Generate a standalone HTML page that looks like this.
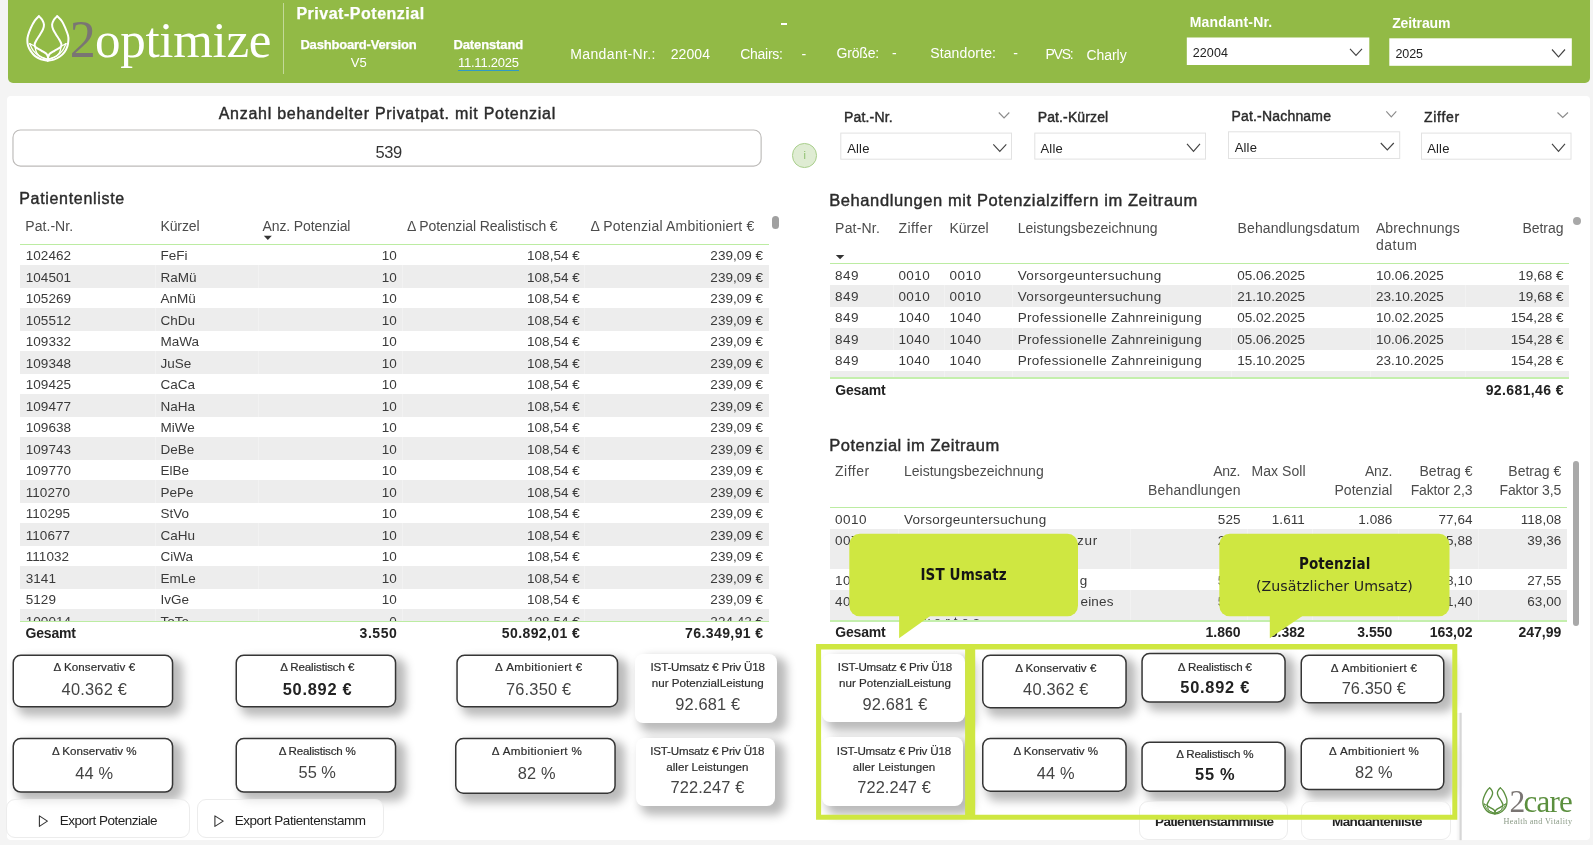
<!DOCTYPE html>
<html lang="de"><head><meta charset="utf-8"><title>Privat-Potenzial</title>
<style>
html,body{margin:0;padding:0}
body{width:1593px;height:845px;overflow:hidden;background:#f4f4f4;position:relative;font-family:"Liberation Sans",sans-serif;color:#333}
#root{position:absolute;left:0;top:0;width:1593px;height:845px;will-change:transform}
.b{position:absolute;display:block}
.t{position:absolute;white-space:pre;font-family:"Liberation Sans",sans-serif;color:#333}
.f{font-family:"Liberation Serif",serif}
.d{font-family:"DejaVu Sans","Liberation Sans",sans-serif}
.dc{font-family:"DejaVu Sans Condensed","DejaVu Sans","Liberation Sans",sans-serif}
</style></head>
<body>
<div id="root">
<div class="b" style="left:8.00px;top:0.00px;width:1582.00px;height:82.60px;background:#92ba46;border-radius:0 0 5px 5px;"></div>
<svg class="b" style="left:23px;top:11px" width="50" height="54"><g transform="translate(3.00,3.40)"><g transform="translate(21.7,23.9) scale(.955) translate(-21.7,-23.5)"><g fill="none" stroke="#fff" stroke-linecap="round" stroke-linejoin="round"><g stroke-width="2.1"><path d="M12.47,0.35 C11.76,1.12 9.62,2.89 8.20,4.96 C6.78,7.04 5.13,10.17 3.94,12.78 C2.76,15.38 1.69,18.46 1.10,20.59 C0.51,22.72 0.39,23.78 0.39,25.56 C0.39,27.34 0.51,29.35 1.10,31.24 C1.69,33.14 2.76,35.15 3.94,36.92 C5.13,38.70 6.43,40.48 8.20,41.90 C9.98,43.32 12.35,44.62 14.60,45.45 C16.85,46.28 20.52,46.63 21.70,46.87"/> <path d="M31.64,0.35 C32.47,1.23 35.19,3.60 36.61,5.67 C38.03,7.75 39.10,10.29 40.16,12.78 C41.23,15.26 42.47,18.46 43.01,20.59 C43.54,22.72 43.48,23.67 43.36,25.56 C43.24,27.45 42.95,29.94 42.30,31.95 C41.64,33.96 40.76,35.86 39.45,37.63 C38.15,39.41 36.38,41.24 34.48,42.61 C32.59,43.97 30.22,45.09 28.09,45.80 C25.96,46.51 22.76,46.69 21.70,46.87"/> <path d="M12.47,0.35 C13.06,1.00 15.13,2.77 16.02,4.25 C16.90,5.73 17.67,7.57 17.79,9.22 C17.91,10.88 17.38,12.54 16.73,14.20 C16.08,15.85 14.95,17.39 13.89,19.17 C12.82,20.94 11.28,23.19 10.34,24.85 C9.39,26.51 8.56,28.05 8.20,29.11 C7.85,30.18 8.03,30.59 8.20,31.24 C8.38,31.89 8.09,32.13 9.27,33.02 C10.45,33.91 13.47,35.44 15.31,36.57 C17.14,37.69 19.15,38.64 20.28,39.76 C21.40,40.89 21.79,42.13 22.05,43.32 C22.31,44.50 21.88,46.28 21.84,46.87"/> <path d="M31.64,0.35 C31.05,1.00 28.98,2.77 28.09,4.25 C27.20,5.73 26.43,7.57 26.32,9.22 C26.20,10.88 26.73,12.54 27.38,14.20 C28.03,15.85 29.16,17.39 30.22,19.17 C31.29,20.94 32.83,23.19 33.77,24.85 C34.72,26.51 35.55,28.05 35.90,29.11 C36.26,30.18 36.08,30.59 35.90,31.24 C35.73,31.89 36.02,32.13 34.84,33.02 C33.65,33.91 30.64,35.44 28.80,36.57 C26.97,37.69 24.95,38.64 23.83,39.76 C22.71,40.89 22.35,42.72 22.05,43.32"/></g><g stroke-width="1.35"><path d="M2.88,29.11 C3.47,30.30 4.83,34.08 6.43,36.21 C8.03,38.34 9.98,40.38 12.47,41.90 C14.95,43.41 19.86,44.74 21.34,45.30"/> <path d="M2.88,29.11 C3.82,29.58 7.61,31.48 8.56,31.95"/> <path d="M8.56,33.37 C8.86,34.32 9.21,37.40 10.34,39.05 C11.46,40.71 13.47,42.19 15.31,43.32 C17.14,44.44 20.34,45.39 21.34,45.80"/> <path d="M40.88,29.11 C40.28,30.30 38.92,34.08 37.32,36.21 C35.73,38.34 33.77,40.38 31.29,41.90 C28.80,43.41 23.89,44.74 22.41,45.30"/> <path d="M40.88,29.11 C39.99,29.58 36.44,31.48 35.55,31.95"/> <path d="M35.55,33.37 C35.25,34.32 34.90,37.40 33.77,39.05 C32.65,40.71 30.70,42.19 28.80,43.32 C26.91,44.44 23.47,45.39 22.41,45.80"/></g></g></g></g></svg>
<span class="t f" style="left:69.70px;top:14.25px;font-size:52px;line-height:52px;color:#7a7573;">2</span>
<span class="t f" style="left:95.10px;top:14.69px;font-size:51px;line-height:51px;color:#fff;letter-spacing:-0.307px;">optimize</span>
<div class="b" style="left:283.00px;top:2.50px;width:1.20px;height:71.50px;background:rgba(255,255,255,.45);"></div>
<span class="t" style="left:296.40px;top:6.16px;font-size:16px;line-height:16px;font-weight:700;color:#fff;letter-spacing:0.518px;-webkit-text-stroke:0.25px currentColor;">Privat-Potenzial</span>
<span class="t" style="left:300.40px;top:38.00px;font-size:13px;line-height:13px;font-weight:700;color:#fff;letter-spacing:-0.187px;-webkit-text-stroke:0.25px currentColor;">Dashboard-Version</span>
<span class="t" style="left:350.75px;top:56.00px;font-size:13px;line-height:13px;color:#fff;">V5</span>
<span class="t" style="left:453.40px;top:38.00px;font-size:13px;line-height:13px;font-weight:700;color:#fff;letter-spacing:-0.110px;-webkit-text-stroke:0.25px currentColor;">Datenstand</span>
<span class="t" style="left:457.90px;top:56.00px;font-size:13px;line-height:13px;color:#fff;letter-spacing:-0.215px;">11.11.2025</span>
<div class="b" style="left:458.20px;top:70.20px;width:60.40px;height:1.30px;background:#2f9bc6;"></div>
<span class="t" style="left:570.20px;top:46.95px;font-size:14px;line-height:14px;color:#fff;letter-spacing:0.398px;">Mandant-Nr.:</span>
<span class="t" style="left:670.70px;top:46.95px;font-size:14px;line-height:14px;color:#fff;letter-spacing:0.092px;">22004</span>
<span class="t" style="left:740.20px;top:46.95px;font-size:14px;line-height:14px;color:#fff;letter-spacing:-0.257px;">Chairs:</span>
<span class="t" style="left:801.50px;top:46.95px;font-size:14px;line-height:14px;color:#fff;">-</span>
<span class="t" style="left:836.40px;top:46.15px;font-size:14px;line-height:14px;color:#fff;letter-spacing:-0.153px;">Größe:</span>
<span class="t" style="left:892.00px;top:46.15px;font-size:14px;line-height:14px;color:#fff;">-</span>
<span class="t" style="left:930.20px;top:46.15px;font-size:14px;line-height:14px;color:#fff;letter-spacing:0.133px;">Standorte:</span>
<span class="t" style="left:1013.30px;top:46.15px;font-size:14px;line-height:14px;color:#fff;">-</span>
<span class="t" style="left:1045.40px;top:47.45px;font-size:14px;line-height:14px;color:#fff;letter-spacing:-1.201px;">PVS:</span>
<span class="t" style="left:1086.40px;top:48.15px;font-size:14px;line-height:14px;color:#fff;letter-spacing:-0.031px;">Charly</span>
<div class="b" style="left:780.60px;top:23.00px;width:6.90px;height:2.20px;background:#fff;"></div>
<span class="t" style="left:1189.70px;top:14.95px;font-size:14px;line-height:14px;font-weight:700;color:#fff;letter-spacing:0.161px;">Mandant-Nr.</span>
<span class="t" style="left:1392.20px;top:15.65px;font-size:14px;line-height:14px;font-weight:700;color:#fff;letter-spacing:-0.118px;">Zeitraum</span>
<svg class="b" style="left:1185px;top:36px" width="186" height="30"><rect x="1.80" y="1.50" width="182.50" height="27.50" fill="#fff"/></svg>
<span class="t" style="left:1192.70px;top:46.92px;font-size:12.5px;line-height:12.5px;color:#222;letter-spacing:0.135px;">22004</span>
<svg class="b" style="left:1348px;top:46px" width="16" height="12"><g transform="translate(2.00,2.80)"><polyline points="0,0 6.00,6.70 12.00,0" fill="none" stroke="#444" stroke-width="1.15"/></g></svg>
<svg class="b" style="left:1388px;top:37px" width="185" height="30"><rect x="1.30" y="1.30" width="182.50" height="27.50" fill="#fff"/></svg>
<span class="t" style="left:1395.50px;top:48.22px;font-size:12.5px;line-height:12.5px;color:#222;letter-spacing:-0.103px;">2025</span>
<svg class="b" style="left:1550px;top:47px" width="17" height="12"><g transform="translate(2.00,2.50)"><polyline points="0,0 6.50,7.30 13.00,0" fill="none" stroke="#444" stroke-width="1.15"/></g></svg>
<div class="b" style="left:7.00px;top:96.00px;width:1583.00px;height:744.20px;background:#fff;border-radius:4px;"></div>
<span class="t" style="left:218.70px;top:105.96px;font-size:16px;line-height:16px;color:#2b2b2b;letter-spacing:0.730px;-webkit-text-stroke:0.42px currentColor;">Anzahl behandelter Privatpat. mit Potenzial</span>
<svg class="b" style="left:11px;top:128px" width="752" height="40"><rect x="1.98" y="1.98" width="748.15" height="36.15" fill="#fff" stroke="#bdbbb9" stroke-width="1.15" rx="7.5"/></svg>
<span class="t" style="left:375.40px;top:144.03px;font-size:16.5px;line-height:16.5px;letter-spacing:-0.365px;">539</span>
<span class="t" style="left:19.20px;top:191.46px;font-size:16px;line-height:16px;color:#2b2b2b;letter-spacing:0.688px;-webkit-text-stroke:0.42px currentColor;">Patientenliste</span>
<span class="t" style="left:25.30px;top:219.15px;font-size:14px;line-height:14px;color:#4c4c4c;letter-spacing:0.049px;">Pat.-Nr.</span>
<span class="t" style="left:160.40px;top:219.15px;font-size:14px;line-height:14px;color:#4c4c4c;letter-spacing:-0.077px;">Kürzel</span>
<span class="t" style="left:262.60px;top:219.15px;font-size:14px;line-height:14px;color:#4c4c4c;letter-spacing:-0.130px;">Anz. Potenzial</span>
<span class="t" style="left:407.10px;top:219.15px;font-size:14px;line-height:14px;color:#4c4c4c;letter-spacing:-0.116px;">Δ Potenzial Realistisch €</span>
<span class="t" style="left:590.40px;top:219.15px;font-size:14px;line-height:14px;color:#4c4c4c;letter-spacing:0.207px;">Δ Potenzial Ambitioniert €</span>
<svg class="b" style="left:261px;top:233px" width="13" height="9"><g transform="translate(2.80,2.80)"><polygon points="0,0 8.00,0 4.00,4.20" fill="#333"/></g></svg>
<div class="b" style="left:771.80px;top:215.50px;width:7.50px;height:13.30px;background:#a0a0a0;border-radius:4px;"></div>
<div class="b" style="left:20px;top:245px;width:748.8px;height:376px;overflow:hidden">
<span class="t" style="left:5.70px;top:4.37px;font-size:13.5px;line-height:13.5px;color:#3a3a3a;letter-spacing:0.070px;">102462</span>
<span class="t" style="left:140.40px;top:4.37px;font-size:13.5px;line-height:13.5px;color:#3a3a3a;">FeFi</span>
<span class="t" style="left:361.71px;top:4.37px;font-size:13.5px;line-height:13.5px;color:#3a3a3a;letter-spacing:0.070px;">10</span>
<span class="t" style="left:507.05px;top:4.37px;font-size:13.5px;line-height:13.5px;color:#3a3a3a;letter-spacing:0.029px;">108,54 €</span>
<span class="t" style="left:690.35px;top:4.37px;font-size:13.5px;line-height:13.5px;color:#3a3a3a;letter-spacing:0.029px;">239,09 €</span>
<div class="b" style="left:0;top:20.10px;width:748.8px;height:22.5px;background:#ededed"></div>
<span class="t" style="left:5.70px;top:25.87px;font-size:13.5px;line-height:13.5px;color:#3a3a3a;letter-spacing:0.070px;">104501</span>
<span class="t" style="left:140.40px;top:25.87px;font-size:13.5px;line-height:13.5px;color:#3a3a3a;">RaMü</span>
<span class="t" style="left:361.71px;top:25.87px;font-size:13.5px;line-height:13.5px;color:#3a3a3a;letter-spacing:0.070px;">10</span>
<span class="t" style="left:507.05px;top:25.87px;font-size:13.5px;line-height:13.5px;color:#3a3a3a;letter-spacing:0.029px;">108,54 €</span>
<span class="t" style="left:690.35px;top:25.87px;font-size:13.5px;line-height:13.5px;color:#3a3a3a;letter-spacing:0.029px;">239,09 €</span>
<span class="t" style="left:5.70px;top:47.37px;font-size:13.5px;line-height:13.5px;color:#3a3a3a;letter-spacing:0.070px;">105269</span>
<span class="t" style="left:140.40px;top:47.37px;font-size:13.5px;line-height:13.5px;color:#3a3a3a;">AnMü</span>
<span class="t" style="left:361.71px;top:47.37px;font-size:13.5px;line-height:13.5px;color:#3a3a3a;letter-spacing:0.070px;">10</span>
<span class="t" style="left:507.05px;top:47.37px;font-size:13.5px;line-height:13.5px;color:#3a3a3a;letter-spacing:0.029px;">108,54 €</span>
<span class="t" style="left:690.35px;top:47.37px;font-size:13.5px;line-height:13.5px;color:#3a3a3a;letter-spacing:0.029px;">239,09 €</span>
<div class="b" style="left:0;top:63.10px;width:748.8px;height:22.5px;background:#ededed"></div>
<span class="t" style="left:5.70px;top:68.87px;font-size:13.5px;line-height:13.5px;color:#3a3a3a;letter-spacing:0.070px;">105512</span>
<span class="t" style="left:140.40px;top:68.87px;font-size:13.5px;line-height:13.5px;color:#3a3a3a;">ChDu</span>
<span class="t" style="left:361.71px;top:68.87px;font-size:13.5px;line-height:13.5px;color:#3a3a3a;letter-spacing:0.070px;">10</span>
<span class="t" style="left:507.05px;top:68.87px;font-size:13.5px;line-height:13.5px;color:#3a3a3a;letter-spacing:0.029px;">108,54 €</span>
<span class="t" style="left:690.35px;top:68.87px;font-size:13.5px;line-height:13.5px;color:#3a3a3a;letter-spacing:0.029px;">239,09 €</span>
<span class="t" style="left:5.70px;top:90.37px;font-size:13.5px;line-height:13.5px;color:#3a3a3a;letter-spacing:0.070px;">109332</span>
<span class="t" style="left:140.40px;top:90.37px;font-size:13.5px;line-height:13.5px;color:#3a3a3a;">MaWa</span>
<span class="t" style="left:361.71px;top:90.37px;font-size:13.5px;line-height:13.5px;color:#3a3a3a;letter-spacing:0.070px;">10</span>
<span class="t" style="left:507.05px;top:90.37px;font-size:13.5px;line-height:13.5px;color:#3a3a3a;letter-spacing:0.029px;">108,54 €</span>
<span class="t" style="left:690.35px;top:90.37px;font-size:13.5px;line-height:13.5px;color:#3a3a3a;letter-spacing:0.029px;">239,09 €</span>
<div class="b" style="left:0;top:106.10px;width:748.8px;height:22.5px;background:#ededed"></div>
<span class="t" style="left:5.70px;top:111.87px;font-size:13.5px;line-height:13.5px;color:#3a3a3a;letter-spacing:0.070px;">109348</span>
<span class="t" style="left:140.40px;top:111.87px;font-size:13.5px;line-height:13.5px;color:#3a3a3a;">JuSe</span>
<span class="t" style="left:361.71px;top:111.87px;font-size:13.5px;line-height:13.5px;color:#3a3a3a;letter-spacing:0.070px;">10</span>
<span class="t" style="left:507.05px;top:111.87px;font-size:13.5px;line-height:13.5px;color:#3a3a3a;letter-spacing:0.029px;">108,54 €</span>
<span class="t" style="left:690.35px;top:111.87px;font-size:13.5px;line-height:13.5px;color:#3a3a3a;letter-spacing:0.029px;">239,09 €</span>
<span class="t" style="left:5.70px;top:133.37px;font-size:13.5px;line-height:13.5px;color:#3a3a3a;letter-spacing:0.070px;">109425</span>
<span class="t" style="left:140.40px;top:133.37px;font-size:13.5px;line-height:13.5px;color:#3a3a3a;">CaCa</span>
<span class="t" style="left:361.71px;top:133.37px;font-size:13.5px;line-height:13.5px;color:#3a3a3a;letter-spacing:0.070px;">10</span>
<span class="t" style="left:507.05px;top:133.37px;font-size:13.5px;line-height:13.5px;color:#3a3a3a;letter-spacing:0.029px;">108,54 €</span>
<span class="t" style="left:690.35px;top:133.37px;font-size:13.5px;line-height:13.5px;color:#3a3a3a;letter-spacing:0.029px;">239,09 €</span>
<div class="b" style="left:0;top:149.10px;width:748.8px;height:22.5px;background:#ededed"></div>
<span class="t" style="left:5.70px;top:154.87px;font-size:13.5px;line-height:13.5px;color:#3a3a3a;letter-spacing:0.070px;">109477</span>
<span class="t" style="left:140.40px;top:154.87px;font-size:13.5px;line-height:13.5px;color:#3a3a3a;">NaHa</span>
<span class="t" style="left:361.71px;top:154.87px;font-size:13.5px;line-height:13.5px;color:#3a3a3a;letter-spacing:0.070px;">10</span>
<span class="t" style="left:507.05px;top:154.87px;font-size:13.5px;line-height:13.5px;color:#3a3a3a;letter-spacing:0.029px;">108,54 €</span>
<span class="t" style="left:690.35px;top:154.87px;font-size:13.5px;line-height:13.5px;color:#3a3a3a;letter-spacing:0.029px;">239,09 €</span>
<span class="t" style="left:5.70px;top:176.37px;font-size:13.5px;line-height:13.5px;color:#3a3a3a;letter-spacing:0.070px;">109638</span>
<span class="t" style="left:140.40px;top:176.37px;font-size:13.5px;line-height:13.5px;color:#3a3a3a;">MiWe</span>
<span class="t" style="left:361.71px;top:176.37px;font-size:13.5px;line-height:13.5px;color:#3a3a3a;letter-spacing:0.070px;">10</span>
<span class="t" style="left:507.05px;top:176.37px;font-size:13.5px;line-height:13.5px;color:#3a3a3a;letter-spacing:0.029px;">108,54 €</span>
<span class="t" style="left:690.35px;top:176.37px;font-size:13.5px;line-height:13.5px;color:#3a3a3a;letter-spacing:0.029px;">239,09 €</span>
<div class="b" style="left:0;top:192.10px;width:748.8px;height:22.5px;background:#ededed"></div>
<span class="t" style="left:5.70px;top:197.87px;font-size:13.5px;line-height:13.5px;color:#3a3a3a;letter-spacing:0.070px;">109743</span>
<span class="t" style="left:140.40px;top:197.87px;font-size:13.5px;line-height:13.5px;color:#3a3a3a;">DeBe</span>
<span class="t" style="left:361.71px;top:197.87px;font-size:13.5px;line-height:13.5px;color:#3a3a3a;letter-spacing:0.070px;">10</span>
<span class="t" style="left:507.05px;top:197.87px;font-size:13.5px;line-height:13.5px;color:#3a3a3a;letter-spacing:0.029px;">108,54 €</span>
<span class="t" style="left:690.35px;top:197.87px;font-size:13.5px;line-height:13.5px;color:#3a3a3a;letter-spacing:0.029px;">239,09 €</span>
<span class="t" style="left:5.70px;top:219.37px;font-size:13.5px;line-height:13.5px;color:#3a3a3a;letter-spacing:0.070px;">109770</span>
<span class="t" style="left:140.40px;top:219.37px;font-size:13.5px;line-height:13.5px;color:#3a3a3a;">ElBe</span>
<span class="t" style="left:361.71px;top:219.37px;font-size:13.5px;line-height:13.5px;color:#3a3a3a;letter-spacing:0.070px;">10</span>
<span class="t" style="left:507.05px;top:219.37px;font-size:13.5px;line-height:13.5px;color:#3a3a3a;letter-spacing:0.029px;">108,54 €</span>
<span class="t" style="left:690.35px;top:219.37px;font-size:13.5px;line-height:13.5px;color:#3a3a3a;letter-spacing:0.029px;">239,09 €</span>
<div class="b" style="left:0;top:235.10px;width:748.8px;height:22.5px;background:#ededed"></div>
<span class="t" style="left:5.70px;top:240.87px;font-size:13.5px;line-height:13.5px;color:#3a3a3a;letter-spacing:0.070px;">110270</span>
<span class="t" style="left:140.40px;top:240.87px;font-size:13.5px;line-height:13.5px;color:#3a3a3a;">PePe</span>
<span class="t" style="left:361.71px;top:240.87px;font-size:13.5px;line-height:13.5px;color:#3a3a3a;letter-spacing:0.070px;">10</span>
<span class="t" style="left:507.05px;top:240.87px;font-size:13.5px;line-height:13.5px;color:#3a3a3a;letter-spacing:0.029px;">108,54 €</span>
<span class="t" style="left:690.35px;top:240.87px;font-size:13.5px;line-height:13.5px;color:#3a3a3a;letter-spacing:0.029px;">239,09 €</span>
<span class="t" style="left:5.70px;top:262.37px;font-size:13.5px;line-height:13.5px;color:#3a3a3a;letter-spacing:0.070px;">110295</span>
<span class="t" style="left:140.40px;top:262.37px;font-size:13.5px;line-height:13.5px;color:#3a3a3a;">StVo</span>
<span class="t" style="left:361.71px;top:262.37px;font-size:13.5px;line-height:13.5px;color:#3a3a3a;letter-spacing:0.070px;">10</span>
<span class="t" style="left:507.05px;top:262.37px;font-size:13.5px;line-height:13.5px;color:#3a3a3a;letter-spacing:0.029px;">108,54 €</span>
<span class="t" style="left:690.35px;top:262.37px;font-size:13.5px;line-height:13.5px;color:#3a3a3a;letter-spacing:0.029px;">239,09 €</span>
<div class="b" style="left:0;top:278.10px;width:748.8px;height:22.5px;background:#ededed"></div>
<span class="t" style="left:5.70px;top:283.87px;font-size:13.5px;line-height:13.5px;color:#3a3a3a;letter-spacing:0.070px;">110677</span>
<span class="t" style="left:140.40px;top:283.87px;font-size:13.5px;line-height:13.5px;color:#3a3a3a;">CaHu</span>
<span class="t" style="left:361.71px;top:283.87px;font-size:13.5px;line-height:13.5px;color:#3a3a3a;letter-spacing:0.070px;">10</span>
<span class="t" style="left:507.05px;top:283.87px;font-size:13.5px;line-height:13.5px;color:#3a3a3a;letter-spacing:0.029px;">108,54 €</span>
<span class="t" style="left:690.35px;top:283.87px;font-size:13.5px;line-height:13.5px;color:#3a3a3a;letter-spacing:0.029px;">239,09 €</span>
<span class="t" style="left:5.70px;top:305.37px;font-size:13.5px;line-height:13.5px;color:#3a3a3a;letter-spacing:0.070px;">111032</span>
<span class="t" style="left:140.40px;top:305.37px;font-size:13.5px;line-height:13.5px;color:#3a3a3a;">CiWa</span>
<span class="t" style="left:361.71px;top:305.37px;font-size:13.5px;line-height:13.5px;color:#3a3a3a;letter-spacing:0.070px;">10</span>
<span class="t" style="left:507.05px;top:305.37px;font-size:13.5px;line-height:13.5px;color:#3a3a3a;letter-spacing:0.029px;">108,54 €</span>
<span class="t" style="left:690.35px;top:305.37px;font-size:13.5px;line-height:13.5px;color:#3a3a3a;letter-spacing:0.029px;">239,09 €</span>
<div class="b" style="left:0;top:321.10px;width:748.8px;height:22.5px;background:#ededed"></div>
<span class="t" style="left:5.70px;top:326.87px;font-size:13.5px;line-height:13.5px;color:#3a3a3a;letter-spacing:0.070px;">3141</span>
<span class="t" style="left:140.40px;top:326.87px;font-size:13.5px;line-height:13.5px;color:#3a3a3a;">EmLe</span>
<span class="t" style="left:361.71px;top:326.87px;font-size:13.5px;line-height:13.5px;color:#3a3a3a;letter-spacing:0.070px;">10</span>
<span class="t" style="left:507.05px;top:326.87px;font-size:13.5px;line-height:13.5px;color:#3a3a3a;letter-spacing:0.029px;">108,54 €</span>
<span class="t" style="left:690.35px;top:326.87px;font-size:13.5px;line-height:13.5px;color:#3a3a3a;letter-spacing:0.029px;">239,09 €</span>
<span class="t" style="left:5.70px;top:348.37px;font-size:13.5px;line-height:13.5px;color:#3a3a3a;letter-spacing:0.070px;">5129</span>
<span class="t" style="left:140.40px;top:348.37px;font-size:13.5px;line-height:13.5px;color:#3a3a3a;">IvGe</span>
<span class="t" style="left:361.71px;top:348.37px;font-size:13.5px;line-height:13.5px;color:#3a3a3a;letter-spacing:0.070px;">10</span>
<span class="t" style="left:507.05px;top:348.37px;font-size:13.5px;line-height:13.5px;color:#3a3a3a;letter-spacing:0.029px;">108,54 €</span>
<span class="t" style="left:690.35px;top:348.37px;font-size:13.5px;line-height:13.5px;color:#3a3a3a;letter-spacing:0.029px;">239,09 €</span>
<div class="b" style="left:0;top:364.10px;width:748.8px;height:22.5px;background:#ededed"></div>
<span class="t" style="left:5.70px;top:369.87px;font-size:13.5px;line-height:13.5px;color:#3a3a3a;letter-spacing:0.070px;">100014</span>
<span class="t" style="left:140.40px;top:369.87px;font-size:13.5px;line-height:13.5px;color:#3a3a3a;">ToTe</span>
<span class="t" style="left:369.29px;top:369.87px;font-size:13.5px;line-height:13.5px;color:#3a3a3a;letter-spacing:0.070px;">0</span>
<span class="t" style="left:507.05px;top:369.87px;font-size:13.5px;line-height:13.5px;color:#3a3a3a;letter-spacing:0.029px;">108,54 €</span>
<span class="t" style="left:690.35px;top:369.87px;font-size:13.5px;line-height:13.5px;color:#3a3a3a;letter-spacing:0.029px;">224,42 €</span>
<div class="b" style="left:135px;top:0;width:1px;height:376px;background:rgba(255,255,255,.3)"></div>
<div class="b" style="left:237.5px;top:0;width:1px;height:376px;background:rgba(255,255,255,.3)"></div>
<div class="b" style="left:382px;top:0;width:1px;height:376px;background:rgba(255,255,255,.3)"></div>
<div class="b" style="left:564px;top:0;width:1px;height:376px;background:rgba(255,255,255,.3)"></div>
</div>
<div class="b" style="left:20.00px;top:243.70px;width:748.80px;height:1.30px;background:#bcecA2;"></div>
<div class="b" style="left:20.00px;top:620.60px;width:748.80px;height:1.40px;background:#bcecA2;"></div>
<span class="t" style="left:25.40px;top:626.15px;font-size:14px;line-height:14px;font-weight:700;color:#222;letter-spacing:-0.152px;">Gesamt</span>
<span class="t" style="left:359.55px;top:626.15px;font-size:14px;line-height:14px;font-weight:700;color:#222;letter-spacing:0.554px;">3.550</span>
<span class="t" style="left:501.80px;top:626.15px;font-size:14px;line-height:14px;font-weight:700;color:#222;letter-spacing:0.404px;">50.892,01 €</span>
<span class="t" style="left:685.10px;top:626.15px;font-size:14px;line-height:14px;font-weight:700;color:#222;letter-spacing:0.404px;">76.349,91 €</span>
<div class="b" style="left:12.80px;top:654.80px;width:160.20px;height:52.40px;background:#fff;border-radius:8px;box-shadow:7px 6px 10px 3px rgba(0,0,0,.27);"></div>
<svg class="b" style="left:10px;top:652px" width="166" height="58"><g transform="translate(2.50,2.50)"><rect x="0.75" y="0.75" width="159.30" height="51.50" rx="7.5" fill="#fff" stroke="#353535" stroke-width="1.5"/></g></svg>
<span class="t" style="left:53.45px;top:661.48px;font-size:11.6px;line-height:11.6px;color:#2e2e2e;letter-spacing:0.078px;-webkit-text-stroke:0.2px currentColor;">Δ Konservativ €</span>
<span class="t" style="left:61.55px;top:681.12px;font-size:16.4px;line-height:16.4px;color:#444;letter-spacing:0.214px;">40.362 €</span>
<div class="b" style="left:235.80px;top:654.80px;width:160.20px;height:52.40px;background:#fff;border-radius:8px;box-shadow:7px 6px 10px 3px rgba(0,0,0,.27);"></div>
<svg class="b" style="left:233px;top:652px" width="166" height="58"><g transform="translate(2.50,2.50)"><rect x="0.75" y="0.75" width="159.30" height="51.50" rx="7.5" fill="#fff" stroke="#353535" stroke-width="1.5"/></g></svg>
<span class="t" style="left:280.20px;top:661.48px;font-size:11.6px;line-height:11.6px;color:#2e2e2e;letter-spacing:-0.135px;-webkit-text-stroke:0.2px currentColor;">Δ Realistisch €</span>
<span class="t" style="left:282.70px;top:681.12px;font-size:16.4px;line-height:16.4px;font-weight:700;color:#222;letter-spacing:0.743px;">50.892 €</span>
<div class="b" style="left:456.60px;top:654.80px;width:161.40px;height:52.40px;background:#fff;border-radius:8px;box-shadow:7px 6px 10px 3px rgba(0,0,0,.27);"></div>
<svg class="b" style="left:454px;top:652px" width="167" height="58"><g transform="translate(2.30,2.50)"><rect x="0.75" y="0.75" width="160.50" height="51.50" rx="7.5" fill="#fff" stroke="#353535" stroke-width="1.5"/></g></svg>
<span class="t" style="left:495.10px;top:661.48px;font-size:11.6px;line-height:11.6px;color:#2e2e2e;letter-spacing:0.397px;-webkit-text-stroke:0.2px currentColor;">Δ Ambitioniert €</span>
<span class="t" style="left:505.95px;top:681.12px;font-size:16.4px;line-height:16.4px;color:#444;letter-spacing:0.214px;">76.350 €</span>
<div class="b" style="left:12.80px;top:738.10px;width:160.20px;height:54.40px;background:#fff;border-radius:8px;box-shadow:7px 6px 10px 3px rgba(0,0,0,.27);"></div>
<svg class="b" style="left:10px;top:735px" width="166" height="60"><g transform="translate(2.50,2.80)"><rect x="0.75" y="0.75" width="159.30" height="53.50" rx="7.5" fill="#fff" stroke="#353535" stroke-width="1.5"/></g></svg>
<span class="t" style="left:51.95px;top:745.48px;font-size:11.6px;line-height:11.6px;color:#2e2e2e;letter-spacing:0.017px;-webkit-text-stroke:0.2px currentColor;">Δ Konservativ %</span>
<span class="t" style="left:75.20px;top:765.12px;font-size:16.4px;line-height:16.4px;color:#444;letter-spacing:0.214px;">44 %</span>
<div class="b" style="left:235.80px;top:738.10px;width:160.20px;height:54.40px;background:#fff;border-radius:8px;box-shadow:7px 6px 10px 3px rgba(0,0,0,.27);"></div>
<svg class="b" style="left:233px;top:735px" width="166" height="60"><g transform="translate(2.50,2.80)"><rect x="0.75" y="0.75" width="159.30" height="53.50" rx="7.5" fill="#fff" stroke="#353535" stroke-width="1.5"/></g></svg>
<span class="t" style="left:278.70px;top:745.48px;font-size:11.6px;line-height:11.6px;color:#2e2e2e;letter-spacing:-0.196px;-webkit-text-stroke:0.2px currentColor;">Δ Realistisch %</span>
<span class="t" style="left:298.55px;top:764.42px;font-size:16.4px;line-height:16.4px;color:#444;letter-spacing:-0.020px;">55 %</span>
<div class="b" style="left:455.30px;top:738.10px;width:160.20px;height:55.60px;background:#fff;border-radius:8px;box-shadow:7px 6px 10px 3px rgba(0,0,0,.27);"></div>
<svg class="b" style="left:453px;top:735px" width="165" height="61"><g transform="translate(2.00,2.80)"><rect x="0.75" y="0.75" width="159.30" height="54.70" rx="7.5" fill="#fff" stroke="#353535" stroke-width="1.5"/></g></svg>
<span class="t" style="left:491.85px;top:745.48px;font-size:11.6px;line-height:11.6px;color:#2e2e2e;letter-spacing:0.319px;-webkit-text-stroke:0.2px currentColor;">Δ Ambitioniert %</span>
<span class="t" style="left:517.70px;top:765.12px;font-size:16.4px;line-height:16.4px;color:#444;letter-spacing:0.214px;">82 %</span>
<div class="b" style="left:635.00px;top:654.00px;width:142.40px;height:68.80px;background:#fff;border-radius:8px;box-shadow:7px 6px 10px 3px rgba(0,0,0,.27);"></div>
<span class="t" style="left:650.55px;top:660.98px;font-size:11.6px;line-height:11.6px;color:#2e2e2e;letter-spacing:-0.180px;-webkit-text-stroke:0.2px currentColor;">IST-Umsatz € Priv Ü18</span>
<span class="t" style="left:651.70px;top:677.48px;font-size:11.6px;line-height:11.6px;color:#2e2e2e;letter-spacing:0.025px;-webkit-text-stroke:0.2px currentColor;">nur PotenzialLeistung</span>
<span class="t" style="left:675.30px;top:695.92px;font-size:16.4px;line-height:16.4px;color:#444;letter-spacing:0.143px;">92.681 €</span>
<div class="b" style="left:636.30px;top:737.80px;width:139.20px;height:68.20px;background:#fff;border-radius:8px;box-shadow:7px 6px 10px 3px rgba(0,0,0,.27);"></div>
<span class="t" style="left:650.25px;top:745.48px;font-size:11.6px;line-height:11.6px;color:#2e2e2e;letter-spacing:-0.180px;-webkit-text-stroke:0.2px currentColor;">IST-Umsatz € Priv Ü18</span>
<span class="t" style="left:666.25px;top:761.18px;font-size:11.6px;line-height:11.6px;color:#2e2e2e;letter-spacing:0.029px;-webkit-text-stroke:0.2px currentColor;">aller Leistungen</span>
<span class="t" style="left:670.40px;top:779.42px;font-size:16.4px;line-height:16.4px;color:#444;letter-spacing:0.135px;">722.247 €</span>
<div class="b" style="left:5.50px;top:799.00px;width:184.00px;height:38.80px;background:rgba(255,255,255,.62);border:1px solid #ececec;border-radius:9px;box-sizing:border-box;"></div>
<svg class="b" style="left:36px;top:813px" width="14" height="16"><g transform="translate(2.80,2.30)"><polygon points="0.6,0.6 8.60,5.85 0.6,11.10" fill="none" stroke="#333" stroke-width="1.1" stroke-linejoin="round"/></g></svg>
<span class="t" style="left:59.70px;top:813.87px;font-size:13.5px;line-height:13.5px;color:#222;letter-spacing:-0.501px;">Export Potenziale</span>
<div class="b" style="left:196.80px;top:799.00px;width:187.00px;height:38.80px;background:rgba(255,255,255,.62);border:1px solid #ececec;border-radius:9px;box-sizing:border-box;"></div>
<svg class="b" style="left:212px;top:813px" width="14" height="16"><g transform="translate(2.30,2.30)"><polygon points="0.6,0.6 8.90,5.85 0.6,11.10" fill="none" stroke="#333" stroke-width="1.1" stroke-linejoin="round"/></g></svg>
<span class="t" style="left:234.70px;top:813.87px;font-size:13.5px;line-height:13.5px;color:#222;letter-spacing:-0.451px;">Export Patientenstamm</span>
<div class="b" style="left:792.30px;top:143.30px;width:24.50px;height:24.50px;background:#dfecd3;border:1.2px solid #a9cf8c;border-radius:50%;box-sizing:border-box;"></div>
<span class="t" style="left:803.38px;top:149.99px;font-size:11px;line-height:11px;color:#8fbf6d;">i</span>
<span class="t" style="left:843.90px;top:109.95px;font-size:14px;line-height:14px;color:#2b2b2b;letter-spacing:0.185px;-webkit-text-stroke:0.42px currentColor;">Pat.-Nr.</span>
<span class="t" style="left:1037.70px;top:109.95px;font-size:14px;line-height:14px;color:#2b2b2b;letter-spacing:0.125px;-webkit-text-stroke:0.42px currentColor;">Pat.-Kürzel</span>
<span class="t" style="left:1231.40px;top:108.95px;font-size:14px;line-height:14px;color:#2b2b2b;letter-spacing:0.194px;-webkit-text-stroke:0.42px currentColor;">Pat.-Nachname</span>
<span class="t" style="left:1423.90px;top:109.95px;font-size:14px;line-height:14px;color:#2b2b2b;letter-spacing:0.733px;-webkit-text-stroke:0.42px currentColor;">Ziffer</span>
<svg class="b" style="left:996px;top:110px" width="16" height="10"><g transform="translate(2.80,2.50)"><polyline points="0,0 5.25,5.50 10.50,0" fill="none" stroke="#8c8c8c" stroke-width="1.15"/></g></svg>
<svg class="b" style="left:1384px;top:109px" width="15" height="10"><g transform="translate(2.30,2.30)"><polyline points="0,0 5.00,5.50 10.00,0" fill="none" stroke="#8c8c8c" stroke-width="1.15"/></g></svg>
<svg class="b" style="left:1555px;top:110px" width="15" height="10"><g transform="translate(2.50,2.50)"><polyline points="0,0 5.25,5.00 10.50,0" fill="none" stroke="#8c8c8c" stroke-width="1.15"/></g></svg>
<svg class="b" style="left:839px;top:131px" width="174" height="30"><rect x="1.80" y="2.10" width="170.70" height="26.10" fill="#fff" stroke="#e2e2e2" stroke-width="1"/></svg>
<span class="t" style="left:847.20px;top:142.00px;font-size:13px;line-height:13px;color:#222;letter-spacing:0.174px;">Alle</span>
<svg class="b" style="left:991px;top:142px" width="18" height="12"><g transform="translate(2.30,2.30)"><polyline points="0,0 6.50,7.00 13.00,0" fill="none" stroke="#444" stroke-width="1.15"/></g></svg>
<svg class="b" style="left:1033px;top:131px" width="174" height="30"><rect x="1.80" y="2.10" width="170.70" height="26.00" fill="#fff" stroke="#e2e2e2" stroke-width="1"/></svg>
<span class="t" style="left:1040.50px;top:142.00px;font-size:13px;line-height:13px;color:#222;letter-spacing:0.174px;">Alle</span>
<svg class="b" style="left:1185px;top:141px" width="17" height="13"><g transform="translate(2.00,2.80)"><polyline points="0,0 6.50,7.50 13.00,0" fill="none" stroke="#444" stroke-width="1.15"/></g></svg>
<svg class="b" style="left:1227px;top:130px" width="175" height="30"><rect x="1.50" y="1.80" width="171.20" height="26.70" fill="#fff" stroke="#e2e2e2" stroke-width="1"/></svg>
<span class="t" style="left:1234.70px;top:140.80px;font-size:13px;line-height:13px;color:#222;letter-spacing:0.174px;">Alle</span>
<svg class="b" style="left:1378px;top:141px" width="18" height="11"><g transform="translate(2.80,2.00)"><polyline points="0,0 6.50,7.00 13.00,0" fill="none" stroke="#444" stroke-width="1.15"/></g></svg>
<svg class="b" style="left:1420px;top:131px" width="153" height="30"><rect x="1.50" y="2.10" width="149.50" height="26.10" fill="#fff" stroke="#e2e2e2" stroke-width="1"/></svg>
<span class="t" style="left:1427.20px;top:142.00px;font-size:13px;line-height:13px;color:#222;letter-spacing:0.174px;">Alle</span>
<svg class="b" style="left:1550px;top:141px" width="17" height="13"><g transform="translate(2.00,2.80)"><polyline points="0,0 6.50,7.50 13.00,0" fill="none" stroke="#444" stroke-width="1.15"/></g></svg>
<span class="t" style="left:829.20px;top:192.33px;font-size:16.5px;line-height:16.5px;color:#2b2b2b;letter-spacing:0.596px;-webkit-text-stroke:0.42px currentColor;">Behandlungen mit Potenzialziffern im Zeitraum</span>
<span class="t" style="left:835.10px;top:220.65px;font-size:14px;line-height:14px;color:#4c4c4c;letter-spacing:0.197px;">Pat-Nr.</span>
<span class="t" style="left:898.40px;top:220.65px;font-size:14px;line-height:14px;color:#4c4c4c;letter-spacing:0.473px;">Ziffer</span>
<span class="t" style="left:949.60px;top:220.65px;font-size:14px;line-height:14px;color:#4c4c4c;letter-spacing:-0.137px;">Kürzel</span>
<span class="t" style="left:1017.70px;top:220.65px;font-size:14px;line-height:14px;color:#4c4c4c;letter-spacing:0.025px;">Leistungsbezeichnung</span>
<span class="t" style="left:1237.60px;top:220.65px;font-size:14px;line-height:14px;color:#4c4c4c;letter-spacing:0.090px;">Behandlungsdatum</span>
<span class="t" style="left:1375.90px;top:220.65px;font-size:14px;line-height:14px;color:#4c4c4c;letter-spacing:0.130px;">Abrechnungs</span>
<span class="t" style="left:1375.90px;top:238.15px;font-size:14px;line-height:14px;color:#4c4c4c;letter-spacing:0.522px;">datum</span>
<span class="t" style="left:1522.50px;top:220.65px;font-size:14px;line-height:14px;color:#4c4c4c;letter-spacing:-0.050px;">Betrag</span>
<svg class="b" style="left:833px;top:253px" width="14" height="9"><g transform="translate(2.80,2.00)"><polygon points="0,0 8.50,0 4.25,4.30" fill="#333"/></g></svg>
<div class="b" style="left:1572.70px;top:217.20px;width:8.00px;height:8.00px;background:#a8a8a8;border-radius:50%;"></div>
<div class="b" style="left:829.50px;top:263.20px;width:739.30px;height:1.20px;background:#bcecA2;"></div>
<span class="t" style="left:835.10px;top:268.57px;font-size:13.5px;line-height:13.5px;color:#3a3a3a;letter-spacing:0.488px;">849</span>
<span class="t" style="left:898.40px;top:268.57px;font-size:13.5px;line-height:13.5px;color:#3a3a3a;letter-spacing:0.423px;">0010</span>
<span class="t" style="left:949.60px;top:268.57px;font-size:13.5px;line-height:13.5px;color:#3a3a3a;letter-spacing:0.423px;">0010</span>
<span class="t" style="left:1017.70px;top:268.57px;font-size:13.5px;line-height:13.5px;color:#3a3a3a;letter-spacing:0.403px;">Vorsorgeuntersuchung</span>
<span class="t" style="left:1237.20px;top:268.57px;font-size:13.5px;line-height:13.5px;color:#3a3a3a;letter-spacing:0.037px;">05.06.2025</span>
<span class="t" style="left:1375.90px;top:268.57px;font-size:13.5px;line-height:13.5px;color:#3a3a3a;letter-spacing:0.037px;">10.06.2025</span>
<span class="t" style="left:1518.29px;top:268.57px;font-size:13.5px;line-height:13.5px;color:#3a3a3a;letter-spacing:0.029px;">19,68 €</span>
<div class="b" style="left:829.50px;top:285.05px;width:739.30px;height:22.30px;background:#ededed;"></div>
<span class="t" style="left:835.10px;top:290.02px;font-size:13.5px;line-height:13.5px;color:#3a3a3a;letter-spacing:0.488px;">849</span>
<span class="t" style="left:898.40px;top:290.02px;font-size:13.5px;line-height:13.5px;color:#3a3a3a;letter-spacing:0.423px;">0010</span>
<span class="t" style="left:949.60px;top:290.02px;font-size:13.5px;line-height:13.5px;color:#3a3a3a;letter-spacing:0.423px;">0010</span>
<span class="t" style="left:1017.70px;top:290.02px;font-size:13.5px;line-height:13.5px;color:#3a3a3a;letter-spacing:0.403px;">Vorsorgeuntersuchung</span>
<span class="t" style="left:1237.20px;top:290.02px;font-size:13.5px;line-height:13.5px;color:#3a3a3a;letter-spacing:0.037px;">21.10.2025</span>
<span class="t" style="left:1375.90px;top:290.02px;font-size:13.5px;line-height:13.5px;color:#3a3a3a;letter-spacing:0.037px;">23.10.2025</span>
<span class="t" style="left:1518.29px;top:290.02px;font-size:13.5px;line-height:13.5px;color:#3a3a3a;letter-spacing:0.029px;">19,68 €</span>
<span class="t" style="left:835.10px;top:311.47px;font-size:13.5px;line-height:13.5px;color:#3a3a3a;letter-spacing:0.488px;">849</span>
<span class="t" style="left:898.40px;top:311.47px;font-size:13.5px;line-height:13.5px;color:#3a3a3a;letter-spacing:0.423px;">1040</span>
<span class="t" style="left:949.60px;top:311.47px;font-size:13.5px;line-height:13.5px;color:#3a3a3a;letter-spacing:0.423px;">1040</span>
<span class="t" style="left:1017.70px;top:311.47px;font-size:13.5px;line-height:13.5px;color:#3a3a3a;letter-spacing:0.338px;">Professionelle Zahnreinigung</span>
<span class="t" style="left:1237.20px;top:311.47px;font-size:13.5px;line-height:13.5px;color:#3a3a3a;letter-spacing:0.037px;">05.02.2025</span>
<span class="t" style="left:1375.90px;top:311.47px;font-size:13.5px;line-height:13.5px;color:#3a3a3a;letter-spacing:0.037px;">10.02.2025</span>
<span class="t" style="left:1510.75px;top:311.47px;font-size:13.5px;line-height:13.5px;color:#3a3a3a;letter-spacing:0.029px;">154,28 €</span>
<div class="b" style="left:829.50px;top:327.95px;width:739.30px;height:22.30px;background:#ededed;"></div>
<span class="t" style="left:835.10px;top:332.92px;font-size:13.5px;line-height:13.5px;color:#3a3a3a;letter-spacing:0.488px;">849</span>
<span class="t" style="left:898.40px;top:332.92px;font-size:13.5px;line-height:13.5px;color:#3a3a3a;letter-spacing:0.423px;">1040</span>
<span class="t" style="left:949.60px;top:332.92px;font-size:13.5px;line-height:13.5px;color:#3a3a3a;letter-spacing:0.423px;">1040</span>
<span class="t" style="left:1017.70px;top:332.92px;font-size:13.5px;line-height:13.5px;color:#3a3a3a;letter-spacing:0.338px;">Professionelle Zahnreinigung</span>
<span class="t" style="left:1237.20px;top:332.92px;font-size:13.5px;line-height:13.5px;color:#3a3a3a;letter-spacing:0.037px;">05.06.2025</span>
<span class="t" style="left:1375.90px;top:332.92px;font-size:13.5px;line-height:13.5px;color:#3a3a3a;letter-spacing:0.037px;">10.06.2025</span>
<span class="t" style="left:1510.75px;top:332.92px;font-size:13.5px;line-height:13.5px;color:#3a3a3a;letter-spacing:0.029px;">154,28 €</span>
<span class="t" style="left:835.10px;top:354.37px;font-size:13.5px;line-height:13.5px;color:#3a3a3a;letter-spacing:0.488px;">849</span>
<span class="t" style="left:898.40px;top:354.37px;font-size:13.5px;line-height:13.5px;color:#3a3a3a;letter-spacing:0.423px;">1040</span>
<span class="t" style="left:949.60px;top:354.37px;font-size:13.5px;line-height:13.5px;color:#3a3a3a;letter-spacing:0.423px;">1040</span>
<span class="t" style="left:1017.70px;top:354.37px;font-size:13.5px;line-height:13.5px;color:#3a3a3a;letter-spacing:0.338px;">Professionelle Zahnreinigung</span>
<span class="t" style="left:1237.20px;top:354.37px;font-size:13.5px;line-height:13.5px;color:#3a3a3a;letter-spacing:0.037px;">15.10.2025</span>
<span class="t" style="left:1375.90px;top:354.37px;font-size:13.5px;line-height:13.5px;color:#3a3a3a;letter-spacing:0.037px;">23.10.2025</span>
<span class="t" style="left:1510.75px;top:354.37px;font-size:13.5px;line-height:13.5px;color:#3a3a3a;letter-spacing:0.029px;">154,28 €</span>
<div class="b" style="left:829.50px;top:370.85px;width:739.30px;height:6.15px;background:#ededed;"></div>
<div class="b" style="left:893.00px;top:264.50px;width:1.20px;height:114.00px;background:rgba(255,255,255,.3);"></div>
<div class="b" style="left:944.00px;top:264.50px;width:1.20px;height:114.00px;background:rgba(255,255,255,.3);"></div>
<div class="b" style="left:1012.00px;top:264.50px;width:1.20px;height:114.00px;background:rgba(255,255,255,.3);"></div>
<div class="b" style="left:1231.00px;top:264.50px;width:1.20px;height:114.00px;background:rgba(255,255,255,.3);"></div>
<div class="b" style="left:1370.20px;top:264.50px;width:1.20px;height:114.00px;background:rgba(255,255,255,.3);"></div>
<div class="b" style="left:1465.00px;top:264.50px;width:1.20px;height:114.00px;background:rgba(255,255,255,.3);"></div>
<div class="b" style="left:829.50px;top:376.60px;width:739.30px;height:2.00px;background:#c4efad;"></div>
<span class="t" style="left:835.20px;top:382.65px;font-size:14px;line-height:14px;font-weight:700;color:#222;letter-spacing:-0.152px;">Gesamt</span>
<span class="t" style="left:1485.70px;top:382.65px;font-size:14px;line-height:14px;font-weight:700;color:#222;letter-spacing:0.384px;">92.681,46 €</span>
<span class="t" style="left:829.20px;top:436.53px;font-size:16.5px;line-height:16.5px;color:#2b2b2b;letter-spacing:0.522px;-webkit-text-stroke:0.42px currentColor;">Potenzial im Zeitraum</span>
<span class="t" style="left:835.10px;top:464.45px;font-size:14px;line-height:14px;color:#4c4c4c;letter-spacing:0.473px;">Ziffer</span>
<span class="t" style="left:903.90px;top:464.45px;font-size:14px;line-height:14px;color:#4c4c4c;letter-spacing:0.025px;">Leistungsbezeichnung</span>
<span class="t" style="left:1213.25px;top:464.45px;font-size:14px;line-height:14px;color:#4c4c4c;letter-spacing:-0.255px;">Anz.</span>
<span class="t" style="left:1148.00px;top:482.65px;font-size:14px;line-height:14px;color:#4c4c4c;letter-spacing:0.199px;">Behandlungen</span>
<span class="t" style="left:1251.50px;top:464.45px;font-size:14px;line-height:14px;color:#4c4c4c;letter-spacing:0.045px;">Max Soll</span>
<span class="t" style="left:1365.00px;top:464.45px;font-size:14px;line-height:14px;color:#4c4c4c;letter-spacing:-0.238px;">Anz.</span>
<span class="t" style="left:1334.50px;top:482.65px;font-size:14px;line-height:14px;color:#4c4c4c;letter-spacing:0.026px;">Potenzial</span>
<span class="t" style="left:1419.50px;top:464.45px;font-size:14px;line-height:14px;color:#4c4c4c;letter-spacing:0.011px;">Betrag €</span>
<span class="t" style="left:1410.70px;top:482.65px;font-size:14px;line-height:14px;color:#4c4c4c;letter-spacing:-0.136px;">Faktor 2,3</span>
<span class="t" style="left:1508.30px;top:464.45px;font-size:14px;line-height:14px;color:#4c4c4c;letter-spacing:0.011px;">Betrag €</span>
<span class="t" style="left:1499.50px;top:482.65px;font-size:14px;line-height:14px;color:#4c4c4c;letter-spacing:-0.136px;">Faktor 3,5</span>
<div class="b" style="left:829.50px;top:507.00px;width:737.30px;height:1.20px;background:#bcecA2;"></div>
<div class="b" style="left:829.50px;top:528.80px;width:737.30px;height:40.00px;background:#ededed;"></div>
<div class="b" style="left:829.50px;top:590.00px;width:737.30px;height:31.00px;background:#ededed;"></div>
<div class="b" style="left:897.50px;top:508.50px;width:1.20px;height:112.50px;background:rgba(255,255,255,.3);"></div>
<div class="b" style="left:1130.00px;top:508.50px;width:1.20px;height:112.50px;background:rgba(255,255,255,.3);"></div>
<div class="b" style="left:1247.00px;top:508.50px;width:1.20px;height:112.50px;background:rgba(255,255,255,.3);"></div>
<div class="b" style="left:1312.00px;top:508.50px;width:1.20px;height:112.50px;background:rgba(255,255,255,.3);"></div>
<div class="b" style="left:1398.00px;top:508.50px;width:1.20px;height:112.50px;background:rgba(255,255,255,.3);"></div>
<div class="b" style="left:1478.00px;top:508.50px;width:1.20px;height:112.50px;background:rgba(255,255,255,.3);"></div>
<span class="t" style="left:835.10px;top:513.07px;font-size:13.5px;line-height:13.5px;color:#3a3a3a;letter-spacing:0.423px;">0010</span>
<span class="t" style="left:903.90px;top:513.07px;font-size:13.5px;line-height:13.5px;color:#3a3a3a;letter-spacing:0.338px;">Vorsorgeuntersuchung</span>
<span class="t" style="left:1217.84px;top:513.07px;font-size:13.5px;line-height:13.5px;color:#3a3a3a;letter-spacing:0.070px;">525</span>
<span class="t" style="left:1271.74px;top:513.07px;font-size:13.5px;line-height:13.5px;color:#3a3a3a;letter-spacing:0.070px;">1.611</span>
<span class="t" style="left:1358.24px;top:513.07px;font-size:13.5px;line-height:13.5px;color:#3a3a3a;letter-spacing:0.070px;">1.086</span>
<span class="t" style="left:1438.44px;top:513.07px;font-size:13.5px;line-height:13.5px;color:#3a3a3a;letter-spacing:0.070px;">77,64</span>
<span class="t" style="left:1520.66px;top:513.07px;font-size:13.5px;line-height:13.5px;color:#3a3a3a;letter-spacing:0.070px;">118,08</span>
<span class="t" style="left:835.10px;top:534.37px;font-size:13.5px;line-height:13.5px;color:#3a3a3a;letter-spacing:0.423px;">0070</span>
<span class="t" style="left:903.90px;top:534.37px;font-size:13.5px;line-height:13.5px;color:#3a3a3a;letter-spacing:0.338px;">Eingehende Untersuchung</span>
<span class="t" style="left:1217.84px;top:534.37px;font-size:13.5px;line-height:13.5px;color:#3a3a3a;letter-spacing:0.070px;">250</span>
<span class="t" style="left:1282.14px;top:534.37px;font-size:13.5px;line-height:13.5px;color:#3a3a3a;letter-spacing:0.070px;">792</span>
<span class="t" style="left:1369.64px;top:534.37px;font-size:13.5px;line-height:13.5px;color:#3a3a3a;letter-spacing:0.070px;">542</span>
<span class="t" style="left:1438.44px;top:534.37px;font-size:13.5px;line-height:13.5px;color:#3a3a3a;letter-spacing:0.070px;">25,88</span>
<span class="t" style="left:1527.24px;top:534.37px;font-size:13.5px;line-height:13.5px;color:#3a3a3a;letter-spacing:0.070px;">39,36</span>
<span class="t" style="left:1077.10px;top:534.37px;font-size:13.5px;line-height:13.5px;color:#3a3a3a;letter-spacing:0.723px;">zur</span>
<span class="t" style="left:835.10px;top:574.37px;font-size:13.5px;line-height:13.5px;color:#3a3a3a;letter-spacing:0.423px;">1040</span>
<span class="t" style="left:903.90px;top:574.37px;font-size:13.5px;line-height:13.5px;color:#3a3a3a;letter-spacing:0.338px;">Professionelle Zahnreini</span>
<span class="t" style="left:1217.84px;top:574.37px;font-size:13.5px;line-height:13.5px;color:#3a3a3a;letter-spacing:0.070px;">529</span>
<span class="t" style="left:1270.74px;top:574.37px;font-size:13.5px;line-height:13.5px;color:#3a3a3a;letter-spacing:0.070px;">1.587</span>
<span class="t" style="left:1358.24px;top:574.37px;font-size:13.5px;line-height:13.5px;color:#3a3a3a;letter-spacing:0.070px;">1.058</span>
<span class="t" style="left:1438.44px;top:574.37px;font-size:13.5px;line-height:13.5px;color:#3a3a3a;letter-spacing:0.070px;">18,10</span>
<span class="t" style="left:1527.24px;top:574.37px;font-size:13.5px;line-height:13.5px;color:#3a3a3a;letter-spacing:0.070px;">27,55</span>
<span class="t" style="left:1079.70px;top:574.37px;font-size:13.5px;line-height:13.5px;color:#3a3a3a;">g</span>
<span class="t" style="left:835.10px;top:595.37px;font-size:13.5px;line-height:13.5px;color:#3a3a3a;letter-spacing:0.423px;">4050</span>
<span class="t" style="left:903.90px;top:595.37px;font-size:13.5px;line-height:13.5px;color:#3a3a3a;letter-spacing:0.338px;">Entfernung harter Beläge</span>
<span class="t" style="left:1217.84px;top:595.37px;font-size:13.5px;line-height:13.5px;color:#3a3a3a;letter-spacing:0.070px;">556</span>
<span class="t" style="left:1270.74px;top:595.37px;font-size:13.5px;line-height:13.5px;color:#3a3a3a;letter-spacing:0.070px;">1.392</span>
<span class="t" style="left:1369.64px;top:595.37px;font-size:13.5px;line-height:13.5px;color:#3a3a3a;letter-spacing:0.070px;">864</span>
<span class="t" style="left:1438.44px;top:595.37px;font-size:13.5px;line-height:13.5px;color:#3a3a3a;letter-spacing:0.070px;">41,40</span>
<span class="t" style="left:1527.24px;top:595.37px;font-size:13.5px;line-height:13.5px;color:#3a3a3a;letter-spacing:0.070px;">63,00</span>
<span class="t" style="left:1080.40px;top:595.37px;font-size:13.5px;line-height:13.5px;color:#3a3a3a;letter-spacing:0.232px;">eines</span>
<div class="b" style="left:829.5px;top:610px;width:737px;height:10.8px;overflow:hidden">
<span class="t" style="left:90.50px;top:5.07px;font-size:13.5px;line-height:13.5px;color:#3a3a3a;letter-spacing:3.998px;">wertes</span>
</div>
<div class="b" style="left:829.50px;top:620.20px;width:737.30px;height:1.80px;background:#c4efad;"></div>
<span class="t" style="left:835.20px;top:624.55px;font-size:14px;line-height:14px;font-weight:700;color:#222;letter-spacing:-0.152px;">Gesamt</span>
<span class="t" style="left:1205.47px;top:624.55px;font-size:14px;line-height:14px;font-weight:700;color:#222;">1.860</span>
<span class="t" style="left:1269.77px;top:624.55px;font-size:14px;line-height:14px;font-weight:700;color:#222;">5.382</span>
<span class="t" style="left:1357.27px;top:624.55px;font-size:14px;line-height:14px;font-weight:700;color:#222;">3.550</span>
<span class="t" style="left:1429.68px;top:624.55px;font-size:14px;line-height:14px;font-weight:700;color:#222;">163,02</span>
<span class="t" style="left:1518.48px;top:624.55px;font-size:14px;line-height:14px;font-weight:700;color:#222;">247,99</span>
<div class="b" style="left:1572.50px;top:461.30px;width:6.80px;height:165.00px;background:#a9a9a9;border-radius:3.5px;"></div>
<svg class="b" style="left:848px;top:532px" width="231" height="86"><rect x="1.30" y="1.80" width="228.70" height="82.50" fill="#cfe741" rx="10.5"/></svg>
<svg class="b" style="left:897px;top:613px" width="37" height="28"><g transform="translate(2.10,2.30)"><polygon points="0,0 32.10,0 0,22.90" fill="#cfe741"/></g></svg>
<span class="t dc" style="left:920.40px;top:568.11px;font-size:15px;line-height:15px;font-weight:700;color:#151515;letter-spacing:0.133px;">IST Umsatz</span>
<svg class="b" style="left:1218px;top:532px" width="233" height="86"><rect x="1.30" y="1.80" width="230.20" height="82.50" fill="#cfe741" rx="10.5"/></svg>
<svg class="b" style="left:1267px;top:613px" width="39" height="28"><g transform="translate(2.80,2.30)"><polygon points="0,0 33.70,0 0,22.90" fill="#cfe741"/></g></svg>
<span class="t dc" style="left:1298.90px;top:557.31px;font-size:15px;line-height:15px;font-weight:700;color:#151515;letter-spacing:0.115px;">Potenzial</span>
<span class="t d" style="left:1255.90px;top:579.29px;font-size:14.2px;line-height:14.2px;color:#222;letter-spacing:0.054px;">(Zusätzlicher Umsatz)</span>
<div class="b" style="left:822.00px;top:654.00px;width:143.00px;height:67.50px;background:#fff;border-radius:8px;box-shadow:7px 6px 10px 3px rgba(0,0,0,.27);"></div>
<span class="t" style="left:837.85px;top:660.98px;font-size:11.6px;line-height:11.6px;color:#2e2e2e;letter-spacing:-0.180px;-webkit-text-stroke:0.2px currentColor;">IST-Umsatz € Priv Ü18</span>
<span class="t" style="left:839.00px;top:677.48px;font-size:11.6px;line-height:11.6px;color:#2e2e2e;letter-spacing:0.025px;-webkit-text-stroke:0.2px currentColor;">nur PotenzialLeistung</span>
<span class="t" style="left:862.60px;top:695.92px;font-size:16.4px;line-height:16.4px;color:#444;letter-spacing:0.143px;">92.681 €</span>
<div class="b" style="left:822.00px;top:737.30px;width:141.00px;height:68.70px;background:#fff;border-radius:8px;box-shadow:7px 6px 10px 3px rgba(0,0,0,.27);"></div>
<span class="t" style="left:836.85px;top:745.48px;font-size:11.6px;line-height:11.6px;color:#2e2e2e;letter-spacing:-0.180px;-webkit-text-stroke:0.2px currentColor;">IST-Umsatz € Priv Ü18</span>
<span class="t" style="left:852.85px;top:761.18px;font-size:11.6px;line-height:11.6px;color:#2e2e2e;letter-spacing:0.029px;-webkit-text-stroke:0.2px currentColor;">aller Leistungen</span>
<span class="t" style="left:857.25px;top:779.42px;font-size:16.4px;line-height:16.4px;color:#444;letter-spacing:0.073px;">722.247 €</span>
<div class="b" style="left:982.30px;top:654.80px;width:144.20px;height:53.40px;background:#fff;border-radius:8px;box-shadow:7px 6px 10px 3px rgba(0,0,0,.27);"></div>
<svg class="b" style="left:980px;top:652px" width="149" height="59"><g transform="translate(2.00,2.50)"><rect x="0.75" y="0.75" width="143.30" height="52.50" rx="7.5" fill="#fff" stroke="#353535" stroke-width="1.5"/></g></svg>
<span class="t" style="left:1015.20px;top:661.68px;font-size:11.6px;line-height:11.6px;color:#2e2e2e;letter-spacing:0.042px;-webkit-text-stroke:0.2px currentColor;">Δ Konservativ €</span>
<span class="t" style="left:1023.05px;top:680.92px;font-size:16.4px;line-height:16.4px;color:#444;letter-spacing:0.214px;">40.362 €</span>
<div class="b" style="left:1141.60px;top:653.10px;width:143.90px;height:49.40px;background:#fff;border-radius:8px;box-shadow:7px 6px 10px 3px rgba(0,0,0,.27);"></div>
<svg class="b" style="left:1139px;top:650px" width="149" height="55"><g transform="translate(2.30,2.80)"><rect x="0.75" y="0.75" width="143.00" height="48.50" rx="7.5" fill="#fff" stroke="#353535" stroke-width="1.5"/></g></svg>
<span class="t" style="left:1177.85px;top:660.98px;font-size:11.6px;line-height:11.6px;color:#2e2e2e;letter-spacing:-0.135px;-webkit-text-stroke:0.2px currentColor;">Δ Realistisch €</span>
<span class="t" style="left:1180.35px;top:678.92px;font-size:16.4px;line-height:16.4px;font-weight:700;color:#222;letter-spacing:0.743px;">50.892 €</span>
<div class="b" style="left:1300.80px;top:654.80px;width:143.40px;height:48.40px;background:#fff;border-radius:8px;box-shadow:7px 6px 10px 3px rgba(0,0,0,.27);"></div>
<svg class="b" style="left:1298px;top:652px" width="149" height="54"><g transform="translate(2.50,2.50)"><rect x="0.75" y="0.75" width="142.50" height="47.50" rx="7.5" fill="#fff" stroke="#353535" stroke-width="1.5"/></g></svg>
<span class="t" style="left:1330.70px;top:661.68px;font-size:11.6px;line-height:11.6px;color:#2e2e2e;letter-spacing:0.344px;-webkit-text-stroke:0.2px currentColor;">Δ Ambitioniert €</span>
<span class="t" style="left:1341.65px;top:680.12px;font-size:16.4px;line-height:16.4px;color:#444;letter-spacing:0.071px;">76.350 €</span>
<div class="b" style="left:982.30px;top:738.10px;width:144.20px;height:53.60px;background:#fff;border-radius:8px;box-shadow:7px 6px 10px 3px rgba(0,0,0,.27);"></div>
<svg class="b" style="left:980px;top:735px" width="149" height="59"><g transform="translate(2.00,2.80)"><rect x="0.75" y="0.75" width="143.30" height="52.70" rx="7.5" fill="#fff" stroke="#353535" stroke-width="1.5"/></g></svg>
<span class="t" style="left:1013.45px;top:745.48px;font-size:11.6px;line-height:11.6px;color:#2e2e2e;letter-spacing:0.017px;-webkit-text-stroke:0.2px currentColor;">Δ Konservativ %</span>
<span class="t" style="left:1036.70px;top:764.62px;font-size:16.4px;line-height:16.4px;color:#444;letter-spacing:0.214px;">44 %</span>
<div class="b" style="left:1141.60px;top:741.80px;width:143.90px;height:49.90px;background:#fff;border-radius:8px;box-shadow:7px 6px 10px 3px rgba(0,0,0,.27);"></div>
<svg class="b" style="left:1139px;top:739px" width="149" height="55"><g transform="translate(2.30,2.50)"><rect x="0.75" y="0.75" width="143.00" height="49.00" rx="7.5" fill="#fff" stroke="#353535" stroke-width="1.5"/></g></svg>
<span class="t" style="left:1176.35px;top:748.48px;font-size:11.6px;line-height:11.6px;color:#2e2e2e;letter-spacing:-0.196px;-webkit-text-stroke:0.2px currentColor;">Δ Realistisch %</span>
<span class="t" style="left:1195.10px;top:765.92px;font-size:16.4px;line-height:16.4px;font-weight:700;color:#222;letter-spacing:0.714px;">55 %</span>
<div class="b" style="left:1300.80px;top:738.10px;width:143.40px;height:51.90px;background:#fff;border-radius:8px;box-shadow:7px 6px 10px 3px rgba(0,0,0,.27);"></div>
<svg class="b" style="left:1298px;top:735px" width="149" height="58"><g transform="translate(2.50,2.80)"><rect x="0.75" y="0.75" width="142.50" height="51.00" rx="7.5" fill="#fff" stroke="#353535" stroke-width="1.5"/></g></svg>
<span class="t" style="left:1328.95px;top:745.48px;font-size:11.6px;line-height:11.6px;color:#2e2e2e;letter-spacing:0.319px;-webkit-text-stroke:0.2px currentColor;">Δ Ambitioniert %</span>
<span class="t" style="left:1354.90px;top:763.92px;font-size:16.4px;line-height:16.4px;color:#444;letter-spacing:0.147px;">82 %</span>
<div class="b" style="left:1138.80px;top:801.00px;width:149.20px;height:38.50px;background:rgba(255,255,255,.62);border:1px solid #ececec;border-radius:9px;box-sizing:border-box;"></div>
<span class="t" style="left:1155.10px;top:815.07px;font-size:13.5px;line-height:13.5px;font-weight:700;color:#222;letter-spacing:-0.683px;">Patientenstammliste</span>
<div class="b" style="left:1301.30px;top:801.00px;width:149.50px;height:38.50px;background:rgba(255,255,255,.62);border:1px solid #ececec;border-radius:9px;box-sizing:border-box;"></div>
<span class="t" style="left:1332.10px;top:815.07px;font-size:13.5px;line-height:13.5px;font-weight:700;color:#222;letter-spacing:-0.613px;">Mandantenliste</span>
<svg class="b" style="left:816px;top:644px" width="642" height="176"><path fill-rule="evenodd" fill="#cfe741" d="M0.05,0.10H641.30V175.80H0.05ZM5.10,5.60H149.10V170.85H5.10ZM159.20,5.60H636.30V170.85H159.20Z"/></svg>
<svg class="b" style="left:1458px;top:711px" width="5" height="131"><rect x="1.70" y="1.80" width="2.00" height="127.40" fill="#d6d6d6"/></svg>
<div class="b" style="left:1456.00px;top:713.00px;width:4.00px;height:127.00px;background:linear-gradient(90deg,rgba(0,0,0,0),rgba(0,0,0,.06));"></div>
<svg class="b" style="left:1480px;top:785px" width="30" height="32"><g transform="translate(2.65,2.65)"><g transform="scale(.56)"><g fill="none" stroke="#5b8f3e" stroke-linecap="round" stroke-linejoin="round"><g stroke-width="2.4"><path d="M12.47,0.35 C11.76,1.12 9.62,2.89 8.20,4.96 C6.78,7.04 5.13,10.17 3.94,12.78 C2.76,15.38 1.69,18.46 1.10,20.59 C0.51,22.72 0.39,23.78 0.39,25.56 C0.39,27.34 0.51,29.35 1.10,31.24 C1.69,33.14 2.76,35.15 3.94,36.92 C5.13,38.70 6.43,40.48 8.20,41.90 C9.98,43.32 12.35,44.62 14.60,45.45 C16.85,46.28 20.52,46.63 21.70,46.87"/> <path d="M31.64,0.35 C32.47,1.23 35.19,3.60 36.61,5.67 C38.03,7.75 39.10,10.29 40.16,12.78 C41.23,15.26 42.47,18.46 43.01,20.59 C43.54,22.72 43.48,23.67 43.36,25.56 C43.24,27.45 42.95,29.94 42.30,31.95 C41.64,33.96 40.76,35.86 39.45,37.63 C38.15,39.41 36.38,41.24 34.48,42.61 C32.59,43.97 30.22,45.09 28.09,45.80 C25.96,46.51 22.76,46.69 21.70,46.87"/> <path d="M12.47,0.35 C13.06,1.00 15.13,2.77 16.02,4.25 C16.90,5.73 17.67,7.57 17.79,9.22 C17.91,10.88 17.38,12.54 16.73,14.20 C16.08,15.85 14.95,17.39 13.89,19.17 C12.82,20.94 11.28,23.19 10.34,24.85 C9.39,26.51 8.56,28.05 8.20,29.11 C7.85,30.18 8.03,30.59 8.20,31.24 C8.38,31.89 8.09,32.13 9.27,33.02 C10.45,33.91 13.47,35.44 15.31,36.57 C17.14,37.69 19.15,38.64 20.28,39.76 C21.40,40.89 21.79,42.13 22.05,43.32 C22.31,44.50 21.88,46.28 21.84,46.87"/> <path d="M31.64,0.35 C31.05,1.00 28.98,2.77 28.09,4.25 C27.20,5.73 26.43,7.57 26.32,9.22 C26.20,10.88 26.73,12.54 27.38,14.20 C28.03,15.85 29.16,17.39 30.22,19.17 C31.29,20.94 32.83,23.19 33.77,24.85 C34.72,26.51 35.55,28.05 35.90,29.11 C36.26,30.18 36.08,30.59 35.90,31.24 C35.73,31.89 36.02,32.13 34.84,33.02 C33.65,33.91 30.64,35.44 28.80,36.57 C26.97,37.69 24.95,38.64 23.83,39.76 C22.71,40.89 22.35,42.72 22.05,43.32"/></g><g stroke-width="1.7"><path d="M2.88,29.11 C3.47,30.30 4.83,34.08 6.43,36.21 C8.03,38.34 9.98,40.38 12.47,41.90 C14.95,43.41 19.86,44.74 21.34,45.30"/> <path d="M2.88,29.11 C3.82,29.58 7.61,31.48 8.56,31.95"/> <path d="M8.56,33.37 C8.86,34.32 9.21,37.40 10.34,39.05 C11.46,40.71 13.47,42.19 15.31,43.32 C17.14,44.44 20.34,45.39 21.34,45.80"/> <path d="M40.88,29.11 C40.28,30.30 38.92,34.08 37.32,36.21 C35.73,38.34 33.77,40.38 31.29,41.90 C28.80,43.41 23.89,44.74 22.41,45.30"/> <path d="M40.88,29.11 C39.99,29.58 36.44,31.48 35.55,31.95"/> <path d="M35.55,33.37 C35.25,34.32 34.90,37.40 33.77,39.05 C32.65,40.71 30.70,42.19 28.80,43.32 C26.91,44.44 23.47,45.39 22.41,45.80"/></g></g></g></g></svg>
<span class="t f" style="left:1509.40px;top:786.02px;font-size:31.5px;line-height:31.5px;color:#7a7573;">2</span>
<span class="t f" style="left:1523.50px;top:786.44px;font-size:31px;line-height:31px;color:#5b8f3e;letter-spacing:-0.767px;">care</span>
<span class="t f" style="left:1503.40px;top:817.63px;font-size:8.2px;line-height:8.2px;color:#8a9a86;letter-spacing:0.363px;">Health and Vitality</span>
</div>
</body></html>
